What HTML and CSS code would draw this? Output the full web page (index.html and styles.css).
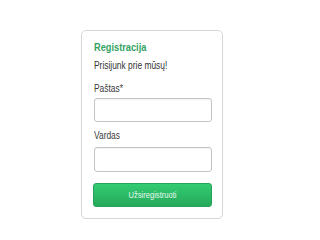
FILE: index.html
```html
<!DOCTYPE html>
<html lang="lt">
<head>
<meta charset="utf-8">
<link rel="stylesheet" href="styles.css">
</head>
<body>
<div class="page">
  <form class="card">
    <h1 class="title"><span class="txt">Registracija</span></h1>
    <p class="subtitle"><span class="txt">Prisijunk prie mūsų!</span></p>
    <label class="label label-first"><span class="txt">Paštas*</span></label>
    <input class="field field-first" type="text">
    <label class="label label-second"><span class="txt">Vardas</span></label>
    <input class="field field-second" type="text">
    <button class="btn" type="button"><span class="txt txt-center">Užsiregistruoti</span></button>
  </form>
</div>
</body>
</html>
```
FILE: styles.css
```css
html, body {
  margin: 0;
  padding: 0;
  background: #ffffff;
}
.page {
  padding: 30px 0 0 81px;
  font-family: "Liberation Sans", Arial, sans-serif;
  color: #333333;
}
.txt {
  display: inline-block;
  white-space: nowrap;
  transform: scaleX(0.84);
  transform-origin: left center;
}
.txt-center {
  transform-origin: center center;
}
.card {
  box-sizing: border-box;
  width: 142px;
  margin: 0;
  padding: 10px 11px 11px;
  border: 1px solid #d6d6d6;
  border-radius: 5px;
  display: flex;
  flex-direction: column;
  box-shadow: 0 1px 1px rgba(0,0,0,0.04);
}
.title {
  margin: 0 0 6px 1px;
  font-size: 11px;
  line-height: 13px;
  font-weight: bold;
  color: #35a263;
}
.subtitle {
  margin: 0 0 11px 1px;
  font-size: 10px;
  line-height: 12px;
}
.label {
  margin-left: 1px;
  font-size: 10px;
  line-height: 12px;
  color: #3a3a3a;
}
.label-second {
  margin-top: 8px;
}
.field {
  box-sizing: border-box;
  width: 118px;
  margin: 3px 0 0 1px;
  border: 1px solid #c4c4c4;
  border-radius: 3px;
  background: #ffffff;
  padding: 0 4px;
  height: 24px;
  box-shadow: inset 0 1px 1px rgba(0,0,0,0.05);
}
.field-second {
  margin-top: 5px;
  height: 25px;
}
.btn {
  box-sizing: border-box;
  width: 119px;
  height: 24px;
  margin-top: 11px;
  border: 1px solid #25a25a;
  border-radius: 3px;
  background: linear-gradient(#33cc72, #26a95b);
  color: #e9f8ee;
  font-family: inherit;
  font-size: 9px;
  padding: 0;
  cursor: pointer;
}
```
